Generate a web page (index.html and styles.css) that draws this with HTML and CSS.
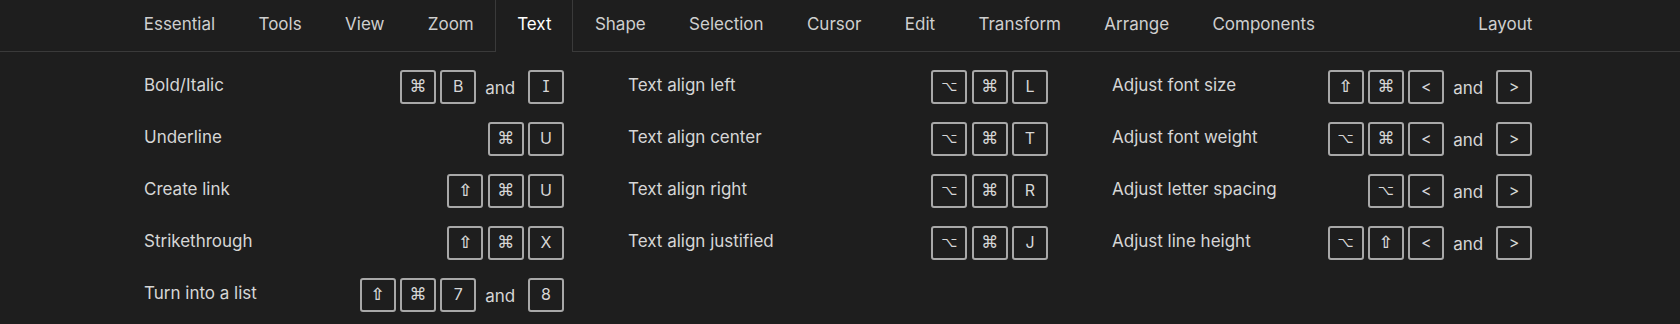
FILE: index.html
```html
<!DOCTYPE html>
<html lang="en">
<head>
    <meta charset="UTF-8">
    <title>Keyboard shortcuts</title>
    <link rel="stylesheet" href="styles.css">
</head>
<body>

    <!-- Tab bar -->
    <nav class="tabs">
        <a class="tab">Essential</a>
        <a class="tab">Tools</a>
        <a class="tab">View</a>
        <a class="tab">Zoom</a>
        <a class="tab active">Text</a>
        <a class="tab">Shape</a>
        <a class="tab">Selection</a>
        <a class="tab">Cursor</a>
        <a class="tab">Edit</a>
        <a class="tab">Transform</a>
        <a class="tab">Arrange</a>
        <a class="tab">Components</a>
        <a class="tab tab-right">Layout</a>
    </nav>

    <!-- Shortcut list -->
    <main class="shortcuts">
        <section class="col">
            <div class="row">
                <span class="label">Bold/Italic</span>
                <span class="keys"><kbd class="sym">⌘</kbd><kbd>B</kbd><span class="and">and</span><kbd>I</kbd></span>
            </div>
            <div class="row">
                <span class="label">Underline</span>
                <span class="keys"><kbd class="sym">⌘</kbd><kbd>U</kbd></span>
            </div>
            <div class="row">
                <span class="label">Create link</span>
                <span class="keys"><kbd class="sym shift">⇧</kbd><kbd class="sym">⌘</kbd><kbd>U</kbd></span>
            </div>
            <div class="row">
                <span class="label">Strikethrough</span>
                <span class="keys"><kbd class="sym shift">⇧</kbd><kbd class="sym">⌘</kbd><kbd>X</kbd></span>
            </div>
            <div class="row">
                <span class="label">Turn into a list</span>
                <span class="keys"><kbd class="sym shift">⇧</kbd><kbd class="sym">⌘</kbd><kbd>7</kbd><span class="and">and</span><kbd>8</kbd></span>
            </div>
        </section>

        <section class="col">
            <div class="row">
                <span class="label">Text align left</span>
                <span class="keys"><kbd class="sym opt">⌥</kbd><kbd class="sym">⌘</kbd><kbd>L</kbd></span>
            </div>
            <div class="row">
                <span class="label">Text align center</span>
                <span class="keys"><kbd class="sym opt">⌥</kbd><kbd class="sym">⌘</kbd><kbd>T</kbd></span>
            </div>
            <div class="row">
                <span class="label">Text align right</span>
                <span class="keys"><kbd class="sym opt">⌥</kbd><kbd class="sym">⌘</kbd><kbd>R</kbd></span>
            </div>
            <div class="row">
                <span class="label">Text align justified</span>
                <span class="keys"><kbd class="sym opt">⌥</kbd><kbd class="sym">⌘</kbd><kbd>J</kbd></span>
            </div>
        </section>

        <section class="col">
            <div class="row">
                <span class="label">Adjust font size</span>
                <span class="keys"><kbd class="sym shift">⇧</kbd><kbd class="sym">⌘</kbd><kbd>&lt;</kbd><span class="and">and</span><kbd>&gt;</kbd></span>
            </div>
            <div class="row">
                <span class="label">Adjust font weight</span>
                <span class="keys"><kbd class="sym opt">⌥</kbd><kbd class="sym">⌘</kbd><kbd>&lt;</kbd><span class="and">and</span><kbd>&gt;</kbd></span>
            </div>
            <div class="row">
                <span class="label">Adjust letter spacing</span>
                <span class="keys"><kbd class="sym opt">⌥</kbd><kbd>&lt;</kbd><span class="and">and</span><kbd>&gt;</kbd></span>
            </div>
            <div class="row">
                <span class="label">Adjust line height</span>
                <span class="keys"><kbd class="sym opt">⌥</kbd><kbd class="sym shift">⇧</kbd><kbd>&lt;</kbd><span class="and">and</span><kbd>&gt;</kbd></span>
            </div>
        </section>
    </main>

</body>
</html>
```

FILE: styles.css
```css
body {
    font-family: Inter, "Noto Sans", sans-serif;
    font-size: 17px;
    line-height: 20px;
    background-color: #1e1e1e;
    color: #d6d6d6;
    margin: 0;
    padding: 0;
}

/* Tab bar */
.tabs {
    display: flex;
    height: 51px;
    padding: 0 126px 0 122px;
    border-bottom: 1px solid #3a3a3a;
}

.tab {
    padding: 14px 20.7px 0;
    border: 1px solid transparent;
    border-width: 0 1px;
    color: #cfcfcf;
    cursor: pointer;
}

.tab.active {
    color: #fff;
    background-color: #1e1e1e;
    border-color: #3a3a3a;
    height: 38px;
    margin-bottom: -1px;
}

.tab-right {
    margin-left: auto;
}

/* Shortcut grid */
.shortcuts {
    display: grid;
    grid-template-columns: repeat(3, 1fr);
    column-gap: 64px;
    padding: 18px 148px 0 144px;
}

.row {
    display: flex;
    justify-content: space-between;
    align-items: flex-start;
    height: 34px;
    margin-bottom: 18px;
}

.label {
    padding-top: 5px;
}

.keys {
    display: flex;
    align-items: flex-start;
}

kbd {
    box-sizing: border-box;
    width: 36px;
    height: 34px;
    margin-left: 4.3px;
    padding-bottom: 2px;
    border: 2px solid #a8a8a8;
    border-radius: 3px;
    display: flex;
    align-items: center;
    justify-content: center;
    font-family: Inter, sans-serif;
    font-feature-settings: "cv08";
    font-size: 16px;
    color: #d6d6d6;
}

kbd.sym {
    font-family: "DejaVu Sans", sans-serif;
    font-size: 17px;
}

kbd.opt {
    font-size: 14px;
}

kbd.shift {
    font-weight: bold;
}

kbd:first-child {
    margin-left: 0;
}

.and {
    padding: 8px 8.5px 0 9px;
}
```
